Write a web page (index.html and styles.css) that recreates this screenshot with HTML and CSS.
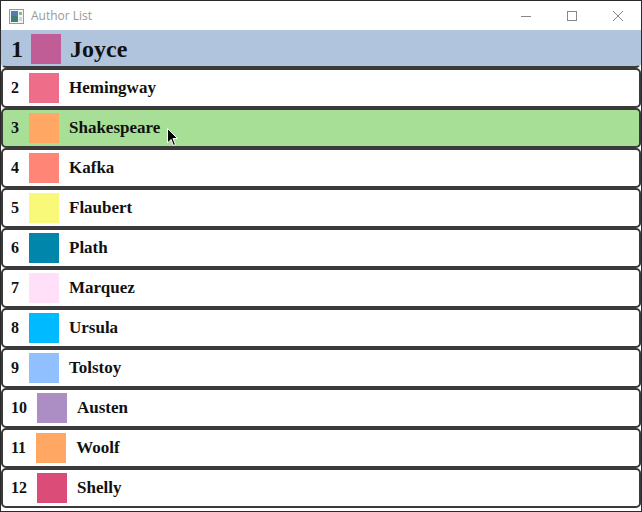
FILE: index.html
```html
<!DOCTYPE html>
<html>
<head>
<meta charset="utf-8">
<link rel="stylesheet" href="styles.css">
</head>
<body>
<div class="window">
  <div class="titlebar">
    <svg class="appicon" width="15" height="15" viewBox="0 0 15 15">
      <rect x="0.5" y="0.5" width="14" height="14" fill="#f4f4f4" stroke="#9a9a9a"/>
      <rect x="2" y="2" width="7" height="11" fill="#3f7f7a"/>
      <rect x="2" y="2" width="7" height="5" fill="#4e7fb0"/>
      <rect x="10" y="3" width="3" height="3" fill="#8fb88a"/>
      <rect x="10" y="8" width="3" height="4" fill="#cfd8cc"/>
    </svg>
    <span class="title">Author List</span>
    <div class="controls">
      <svg class="ctl" width="46" height="29" viewBox="0 0 46 29"><line x1="18" y1="15.5" x2="28" y2="15.5" stroke="#888" stroke-width="1"/></svg>
      <svg class="ctl" width="46" height="29" viewBox="0 0 46 29"><rect x="18.5" y="10.5" width="9" height="9" fill="none" stroke="#888" stroke-width="1"/></svg>
      <svg class="ctl" width="46" height="29" viewBox="0 0 46 29"><path d="M18 10 L28 20 M28 10 L18 20" stroke="#888" stroke-width="1"/></svg>
    </div>
  </div>
  <div class="list">
    <div class="row selected"><span class="num">1</span><span class="sw" style="background:#c05c96"></span><span class="name">Joyce</span></div>
    <div class="row"><span class="num">2</span><span class="sw" style="background:#ee6e8a"></span><span class="name">Hemingway</span></div>
    <div class="row hover"><span class="num">3</span><span class="sw" style="background:#ffa763"></span><span class="name">Shakespeare</span></div>
    <div class="row"><span class="num">4</span><span class="sw" style="background:#ff8577"></span><span class="name">Kafka</span></div>
    <div class="row"><span class="num">5</span><span class="sw" style="background:#f8f879"></span><span class="name">Flaubert</span></div>
    <div class="row"><span class="num">6</span><span class="sw" style="background:#0086aa"></span><span class="name">Plath</span></div>
    <div class="row"><span class="num">7</span><span class="sw" style="background:#ffe0f8"></span><span class="name">Marquez</span></div>
    <div class="row"><span class="num">8</span><span class="sw" style="background:#00baff"></span><span class="name">Ursula</span></div>
    <div class="row"><span class="num">9</span><span class="sw" style="background:#90c0ff"></span><span class="name">Tolstoy</span></div>
    <div class="row"><span class="num">10</span><span class="sw" style="background:#ac8ec4"></span><span class="name">Austen</span></div>
    <div class="row"><span class="num">11</span><span class="sw" style="background:#ffa763"></span><span class="name">Woolf</span></div>
    <div class="row"><span class="num">12</span><span class="sw" style="background:#dc4c78"></span><span class="name">Shelly</span></div>
  </div>
  <svg class="cursor" width="12" height="19" viewBox="0 0 12 19">
    <path d="M0.5 0.5 L0.5 15 L4 11.5 L6.5 17.5 L8.5 16.5 L6 10.5 L10.5 10.5 Z" fill="#000" stroke="#fff" stroke-width="1"/>
  </svg>
</div>
</body>
</html>
```
FILE: styles.css
```css
html, body {
  margin: 0;
  padding: 0;
  background: #fff;
}
.window {
  position: relative;
  width: 642px;
  height: 512px;
  box-sizing: border-box;
  border: 1px solid #2b2b2b;
  background: #fff;
  overflow: hidden;
}
.titlebar {
  height: 29px;
  display: flex;
  align-items: center;
  background: #fff;
}
.appicon {
  margin-left: 8px;
  margin-top: 1px;
}
.title {
  margin-left: 7px;
  font-family: "Open Sans", "Noto Sans", sans-serif;
  font-size: 12px;
  color: #999;
}
.controls {
  margin-left: auto;
  display: flex;
}
.ctl { display: block; }
.list {
  display: flex;
  flex-direction: column;
}
.row {
  height: 40px;
  box-sizing: border-box;
  border: 2px solid #3a3a3a;
  border-radius: 5px;
  display: flex;
  align-items: center;
  padding-left: 8px;
  font-family: "Liberation Serif", serif;
  font-weight: bold;
  font-size: 17px;
  color: #111;
  background: #fff;
}
.row .num {
  font-size: 16px;
  margin-right: 10px;
}
.row .sw {
  width: 30px;
  height: 30px;
  margin-right: 10px;
  flex: none;
}
.row.selected {
  height: 38px;
  background: #b0c4de;
  border-color: #b0c4de #b0c4de #3a3a3a #b0c4de;
  border-radius: 0 0 5px 5px;
  font-size: 24px;
}
.row.selected .num {
  font-size: 24px;
  margin-right: 8px;
}
.row.selected .sw {
  margin-right: 9px;
}
.row.hover {
  background: #a8df96;
}
.cursor {
  position: absolute;
  left: 166px;
  top: 127px;
}
```
